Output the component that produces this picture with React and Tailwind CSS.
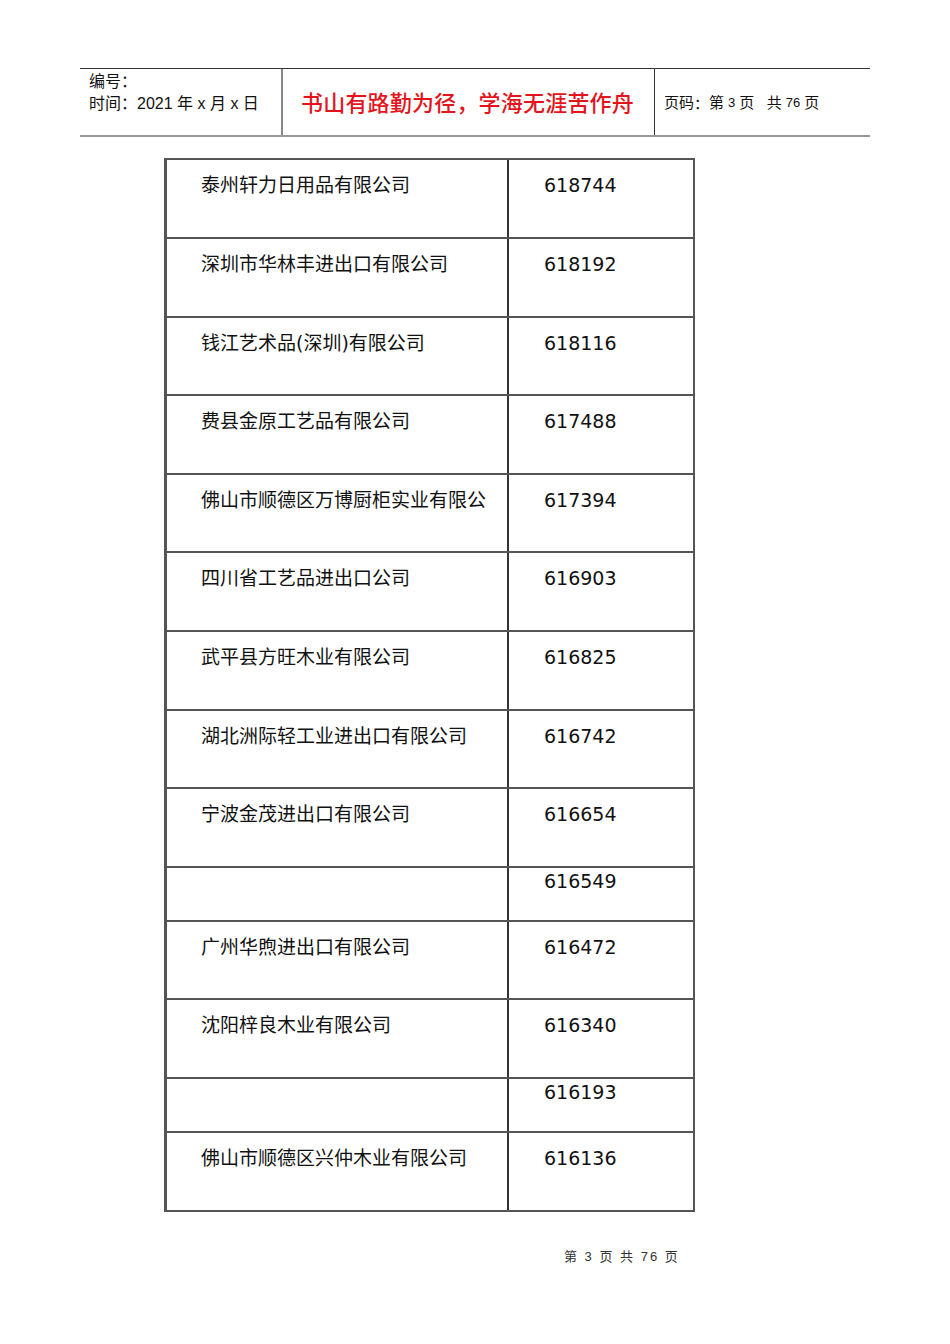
import React from "react";

const rows = [
  { name: "泰州轩力日用品有限公司", code: "618744" },
  { name: "深圳市华林丰进出口有限公司", code: "618192" },
  { name: "钱江艺术品(深圳)有限公司", code: "618116" },
  { name: "费县金原工艺品有限公司", code: "617488" },
  { name: "佛山市顺德区万博厨柜实业有限公", code: "617394" },
  { name: "四川省工艺品进出口公司", code: "616903" },
  { name: "武平县方旺木业有限公司", code: "616825" },
  { name: "湖北洲际轻工业进出口有限公司", code: "616742" },
  { name: "宁波金茂进出口有限公司", code: "616654" },
  { name: "", code: "616549", short: true },
  { name: "广州华煦进出口有限公司", code: "616472" },
  { name: "沈阳梓良木业有限公司", code: "616340" },
  { name: "", code: "616193", short: true },
  { name: "佛山市顺德区兴仲木业有限公司", code: "616136" },
];

// fullwidth colon, kept at full width
const Colon = () => (
  <span className="inline-block w-[1em] font-['Noto_Sans_CJK_SC',sans-serif]">：</span>
);

function Row({ name, code, short, first }) {
  const h = short ? "h-[54px]" : first ? "h-[77px]" : "h-[78.6px]";
  return (
    <div className={`flex ${h} ${first ? "" : "border-t-2 border-[#555]"}`}>
      <div className={`w-[340px] pl-[34px] ${short ? "pt-0" : "pt-[12px]"}`}>
        {name}
      </div>
      <div
        className={`flex-1 border-l-2 border-[#333] pl-[35px] ${
          short ? "pt-0" : "pt-[12px]"
        }`}
      >
        {code}
      </div>
    </div>
  );
}

export default function App() {
  return (
    <div className="w-[950px] h-[1344px] bg-white text-black font-['DejaVu_Sans','Noto_Sans_CJK_SC',sans-serif]">
      <div className="pt-[68px] pl-[80px] font-['Liberation_Sans','Noto_Sans_CJK_SC',sans-serif]">
        <div className="w-[790px] h-[69px] flex border-t border-[#333] border-b-2 border-b-[#999]">
          <div className="w-[201px] pl-[9px] pt-[1px] text-[16px] leading-[20px] text-[#111]">
            <div>
              编号<Colon />
            </div>
            <div>
              时间<Colon />2021 年 x 月 x 日
            </div>
          </div>
          <div className="w-[373px] border-l-2 border-[#888] flex items-center pl-[18px] pt-[2px] text-[22px] font-medium text-[#e3141b] tracking-[0.2px]">
            书山有路勤为径，学海无涯苦作舟
          </div>
          <div className="flex-1 border-l border-[#333] flex items-center pl-[9px] pt-[2px] text-[15px] text-[#111]">
            页码<Colon />第<span className="text-[13px] mx-[4px]">3</span>页&nbsp;&nbsp; 共
            <span className="text-[13px] mx-[4px]">76</span>页
          </div>
        </div>
      </div>

      <div className="pt-[21px] pl-[164px]">
        <div className="w-[531px] border-2 border-[#555] border-l-[3px] text-[19px] leading-[26px] text-[#111]">
          {rows.map((r, i) => (
            <Row key={i} {...r} first={i === 0} />
          ))}
        </div>
      </div>

      <div className="pt-[35px] pl-[564px] text-[13px] text-[#333] font-['Liberation_Sans','Noto_Sans_CJK_SC',sans-serif] tracking-[2px]">
        第 3 页 共 76 页
      </div>
    </div>
  );
}
